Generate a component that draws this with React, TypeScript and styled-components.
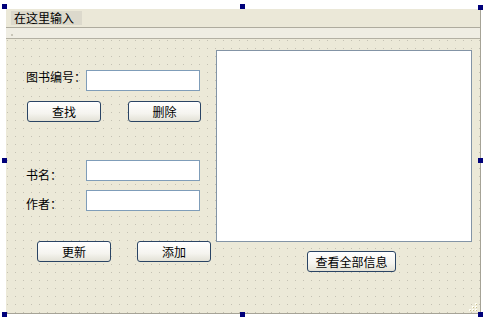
import React from 'react';
import styled, { createGlobalStyle } from 'styled-components';

const Global = createGlobalStyle`
  html, body { margin: 0; padding: 0; background: #ffffff; }
  body { font-family: "Noto Sans CJK SC", "Liberation Sans", sans-serif; }
  * { box-sizing: border-box; }
`;

const Stage = styled.div`
  position: relative;
  width: 488px;
  height: 322px;
  overflow: hidden;
  background: #ffffff;
  padding: 9px 0 0 6px;
`;

const Form = styled.div`
  position: relative;
  width: 475px;
  height: 305px;
  border-right: 1px solid #a6a396;
  border-bottom: 1px solid #a6a396;
  background: #ece9d8;
  display: flex;
  flex-direction: column;
`;

const MenuStrip = styled.div`
  height: 19px;
  border-bottom: 1px solid #aeab9e;
  display: flex;
  align-items: flex-start;
  padding: 2px 0 0 5px;
  background: #ebe8d8;
`;

const MenuItem = styled.div`
  width: 71px;
  height: 14px;
  background: #dcd9cc;
  font-size: 12px;
  line-height: 14px;
  color: #000;
  padding-left: 3px;
  white-space: nowrap;
`;

const ToolBand = styled.div`
  height: 11px;
  border-bottom: 1px solid #b3b0a3;
  background: #efede3;
  display: flex;
  align-items: center;
  padding-left: 5px;
`;

const GripDot = styled.span`
  width: 2px;
  height: 2px;
  background: #c9c6b9;
  margin-top: 3px;
`;

const Client = styled.div`
  flex: 1;
  display: flex;
  background-color: #ece9d8;
  background-image:
    linear-gradient(to right, #ece9d8 7px, transparent 7px),
    linear-gradient(to bottom, #ece9d8 7px, #c4c1b3 7px);
  background-size: 8px 8px;
  background-position: 2px 2px;
`;

const LeftColumn = styled.div`
  width: 210px;
  display: flex;
  flex-direction: column;
  padding-top: 31px;
`;

const FieldRow = styled.div<{ $top: number }>`
  display: flex;
  align-items: flex-start;
  margin-top: ${(p) => p.$top}px;
  padding-left: 20px;
  height: 21px;
`;

const FieldLabel = styled.span<{ $dy: number }>`
  width: 60px;
  font-size: 12px;
  line-height: 20px;
  color: #000;
  margin-top: ${(p) => p.$dy}px;
  white-space: nowrap;
`;

const TextBox = styled.div`
  width: 114px;
  height: 21px;
  background: #ffffff;
  border: 1px solid #7f9db9;
`;

const ButtonRow = styled.div<{ $top: number; $left: number; $gap: number }>`
  display: flex;
  margin-top: ${(p) => p.$top}px;
  padding-left: ${(p) => p.$left}px;
  gap: ${(p) => p.$gap}px;
`;

const Button = styled.button<{ $w: number }>`
  width: ${(p) => p.$w}px;
  height: 21px;
  border: 1px solid #2a4464;
  border-radius: 3px;
  background: linear-gradient(#ffffff, #f5f4ef 60%, #e3e1d6);
  font-family: "Noto Sans CJK SC", "Liberation Sans", sans-serif;
  font-size: 12px;
  line-height: 19px;
  color: #000;
  padding: 0;
  margin: 0;
  cursor: default;
`;

const RightColumn = styled.div`
  display: flex;
  flex-direction: column;
  padding-top: 11px;
`;

const BigTextBox = styled.div`
  width: 256px;
  height: 192px;
  background: #ffffff;
  border: 1px solid #8394a6;
`;

const RightButtonRow = styled.div`
  display: flex;
  margin-top: 9px;
  padding-left: 91px;
`;

const Handle = styled.span`
  position: absolute;
  width: 5px;
  height: 5px;
  background: #00007a;
`;

const SizeGrip = styled.svg`
  position: absolute;
  right: 2px;
  bottom: 1px;
`;

const handles: Array<[number, number]> = [
  [2, 4],
  [240, 4],
  [478, 5],
  [2, 158],
  [478, 158],
  [2, 312],
  [240, 312],
  [478, 312],
];

export default function App() {
  return (
    <>
      <Global />
      <Stage>
        <Form>
          <MenuStrip>
            <MenuItem>在这里输入</MenuItem>
          </MenuStrip>
          <ToolBand>
            <GripDot />
          </ToolBand>
          <Client>
            <LeftColumn>
              <FieldRow $top={0}>
                <FieldLabel $dy={-3}>图书编号：</FieldLabel>
                <TextBox />
              </FieldRow>
              <ButtonRow $top={10} $left={21} $gap={27}>
                <Button $w={74}>查找</Button>
                <Button $w={73}>删除</Button>
              </ButtonRow>
              <FieldRow $top={38}>
                <FieldLabel $dy={5}>书名：</FieldLabel>
                <TextBox />
              </FieldRow>
              <FieldRow $top={9}>
                <FieldLabel $dy={4}>作者：</FieldLabel>
                <TextBox />
              </FieldRow>
              <ButtonRow $top={30} $left={31} $gap={26}>
                <Button $w={74}>更新</Button>
                <Button $w={74}>添加</Button>
              </ButtonRow>
            </LeftColumn>
            <RightColumn>
              <BigTextBox />
              <RightButtonRow>
                <Button $w={89}>查看全部信息</Button>
              </RightButtonRow>
            </RightColumn>
          </Client>
          <SizeGrip width="10" height="10" viewBox="0 0 10 10">
            <g fill="#fffef4">
              <rect x="7" y="1" width="2" height="2" />
              <rect x="4" y="4" width="2" height="2" />
              <rect x="7" y="4" width="2" height="2" />
              <rect x="1" y="7" width="2" height="2" />
              <rect x="4" y="7" width="2" height="2" />
              <rect x="7" y="7" width="2" height="2" />
            </g>
            <g fill="#c7bf8c">
              <rect x="8" y="2" width="1" height="1" />
              <rect x="5" y="5" width="1" height="1" />
              <rect x="8" y="5" width="1" height="1" />
              <rect x="2" y="8" width="1" height="1" />
              <rect x="5" y="8" width="1" height="1" />
              <rect x="8" y="8" width="1" height="1" />
            </g>
          </SizeGrip>
        </Form>
        {handles.map(([x, y]) => (
          <Handle key={`${x}-${y}`} style={{ left: x, top: y }} />
        ))}
      </Stage>
    </>
  );
}
